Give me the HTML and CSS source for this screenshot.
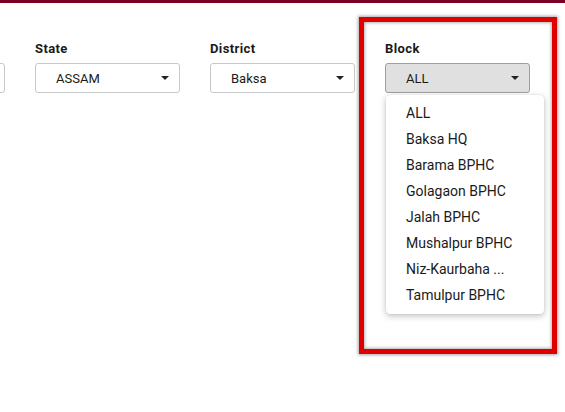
FILE: index.html
```html
<!DOCTYPE html>
<html>
<head>
<meta charset="utf-8">
<link rel="stylesheet" href="styles.css">
</head>
<body>
<div class="topbar"></div>
<div class="filters">
  <div class="field">
    <div class="label"></div>
    <div class="select"><span></span></div>
  </div>
  <div class="field">
    <div class="label">State</div>
    <div class="select"><span>ASSAM</span><i class="caret"></i></div>
  </div>
  <div class="field">
    <div class="label">District</div>
    <div class="select"><span>Baksa</span><i class="caret"></i></div>
  </div>
  <div class="field block">
    <div class="label">Block</div>
    <div class="select active"><span>ALL</span><i class="caret"></i></div>
    <ul class="menu">
      <li>ALL</li>
      <li>Baksa HQ</li>
      <li>Barama BPHC</li>
      <li>Golagaon BPHC</li>
      <li>Jalah BPHC</li>
      <li>Mushalpur BPHC</li>
      <li>Niz-Kaurbaha ...</li>
      <li>Tamulpur BPHC</li>
    </ul>
  </div>
</div>
<div class="highlight"></div>
</body>
</html>
```

FILE: styles.css
```css
html, body {
  margin: 0;
  padding: 0;
  background: #fff;
  font-family: Roboto, "Liberation Sans", sans-serif;
  color: #1a1a1a;
  overflow: hidden;
  width: 565px;
  height: 412px;
  position: relative;
}
.topbar {
  height: 3px;
  background: #7a0026;
}
.filters {
  display: flex;
  gap: 30px;
  margin-left: -140px;
  padding-top: 38px;
}
.field {
  width: 145px;
  position: relative;
  flex: none;
}
.label {
  font-size: 13px;
  font-weight: 700;
  letter-spacing: 0.4px;
  line-height: 16px;
  height: 16px;
  margin-bottom: 6px;
}
.select {
  box-sizing: border-box;
  height: 30px;
  border: 1px solid #c8c8c8;
  border-radius: 3px;
  display: flex;
  align-items: center;
  padding: 0 10px 0 20px;
  font-size: 13px;
  background: #fff;
}
.select span {
  flex: 1;
}
.select.active {
  background: #e0e0e0;
  border-color: #9e9e9e;
}
.caret {
  width: 0;
  height: 0;
  border-left: 4px solid transparent;
  border-right: 4px solid transparent;
  border-top: 4px solid #222;
}
.menu {
  position: absolute;
  left: 1px;
  top: 54px;
  width: 158px;
  box-sizing: border-box;
  margin: 0;
  padding: 5px 0 6px;
  list-style: none;
  background: #fff;
  border-radius: 4px;
  box-shadow: 0 2px 6px rgba(0,0,0,0.25), 0 0 1px rgba(0,0,0,0.2);
  z-index: 2;
}
.menu li {
  font-size: 14px;
  line-height: 26px;
  padding-left: 20px;
  white-space: nowrap;
}
.highlight {
  position: absolute;
  left: 359px;
  top: 17px;
  width: 198px;
  height: 337px;
  box-sizing: border-box;
  border: 5px solid #e00000;
  box-shadow: 0 0 3px 1px rgba(0,0,0,0.35), inset 0 0 3px 1px rgba(0,0,0,0.3);
  z-index: 3;
  pointer-events: none;
}
```
